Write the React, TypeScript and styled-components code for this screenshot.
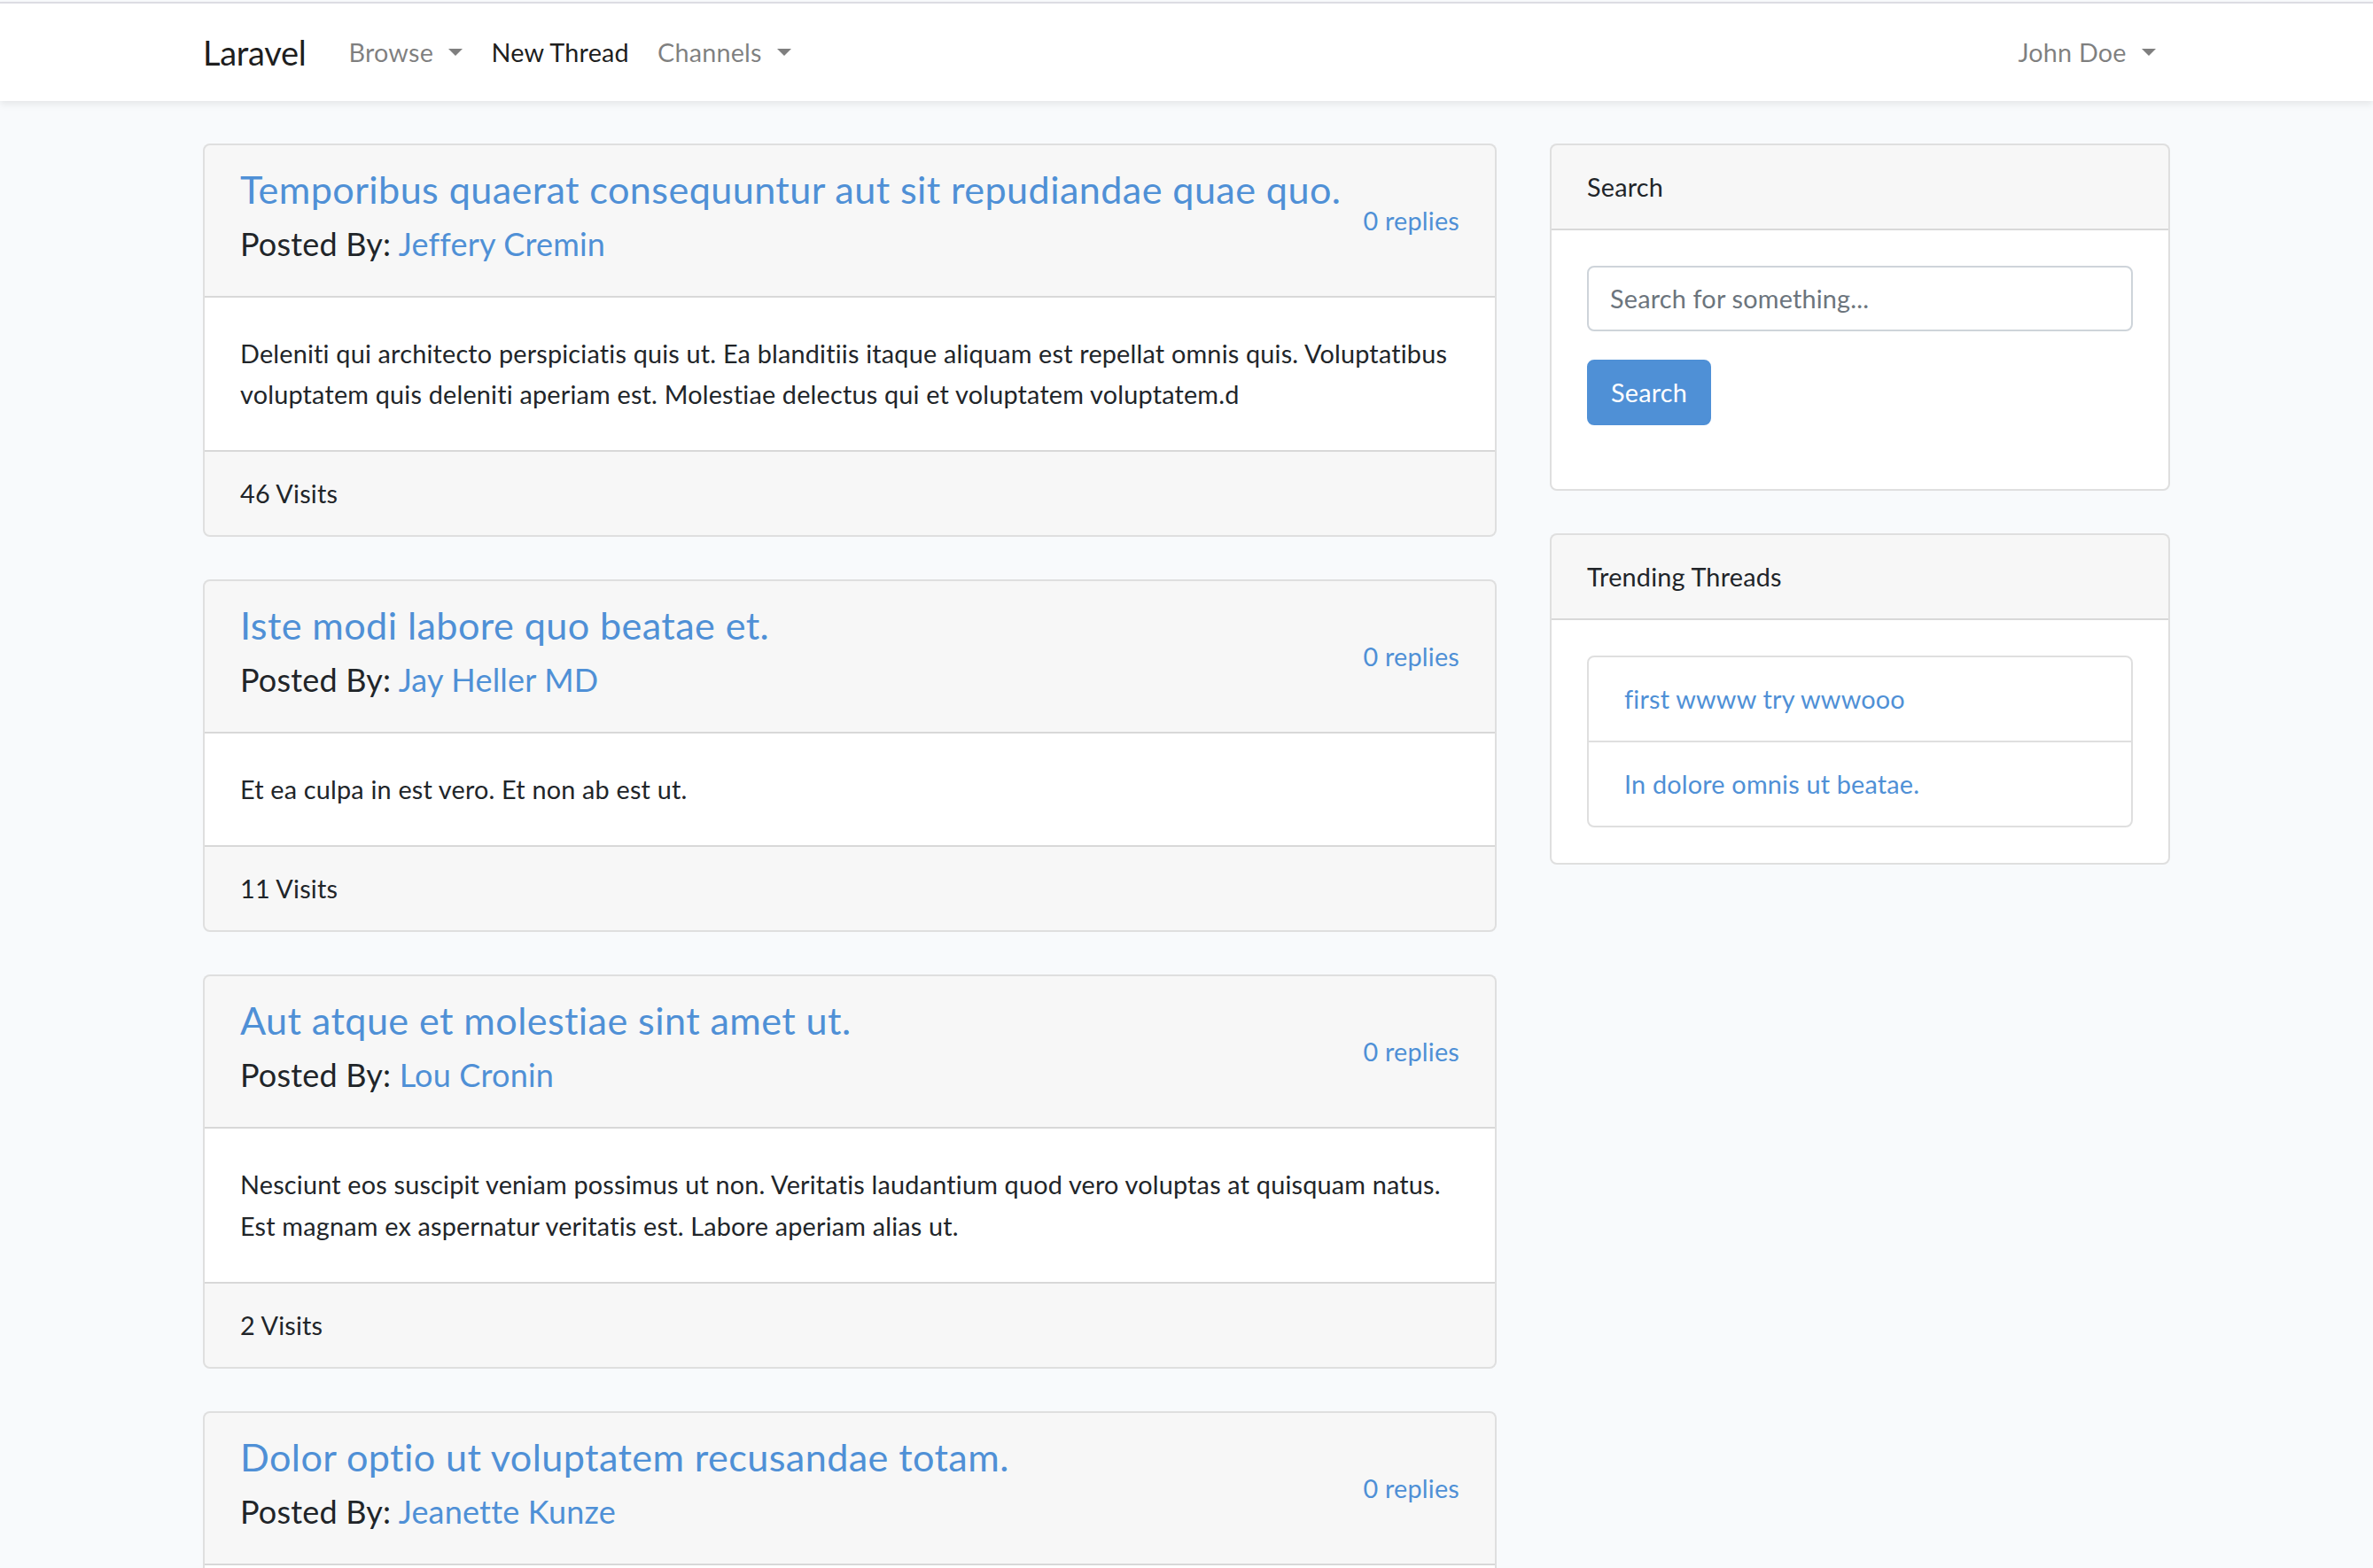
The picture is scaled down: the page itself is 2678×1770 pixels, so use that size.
import React from 'react';
import styled, { createGlobalStyle } from 'styled-components';

const BLUE = '#4f90d6';
const BORDER = 'rgba(0,0,0,.125)';

const GlobalStyle = createGlobalStyle`
  * { box-sizing: border-box; }
  html, body { margin: 0; padding: 0; }
  body {
    background: #f8fafc;
    font-family: Lato, "Noto Sans", sans-serif;
    font-size: 28.8px;
    line-height: 1.6;
    letter-spacing: 0.007em;
    color: #212529;
    padding-top: 2px;
  }
  a { color: ${BLUE}; text-decoration: none; }
`;

const Navbar = styled.nav`
  background: #fff;
  border-top: 2px solid #dcdce3;
  box-shadow: 0 4px 8px rgba(0, 0, 0, 0.075);
  padding: 16px 0;
  position: relative;
`;

const Container = styled.div`
  width: 2280px;
  max-width: 100%;
  margin: 0 auto;
  padding: 0 30px;
`;

const NavInner = styled.div`
  display: flex;
  align-items: center;
`;

const Brand = styled.a`
  font-size: 38px;
  line-height: 60px;
  letter-spacing: -0.3px;
  padding: 9px 0;
  margin-right: 32px;
  color: rgba(0, 0, 0, 0.9);
`;

const NavGroup = styled.div<{ $right?: boolean }>`
  display: flex;
  align-items: center;
  margin-left: ${(p) => (p.$right ? 'auto' : '0')};
`;

const NavLink = styled.a<{ $active?: boolean; $caret?: boolean }>`
  padding: 16px;
  font-size: 28.8px;
  line-height: 1.6;
  color: ${(p) => (p.$active ? 'rgba(0,0,0,.9)' : 'rgba(0,0,0,.5)')};
  ${(p) =>
    p.$caret
      ? `&::after {
    content: '';
    display: inline-block;
    margin-left: 0.6em;
    vertical-align: 0.255em;
    border-top: 0.3em solid;
    border-right: 0.3em solid transparent;
    border-bottom: 0;
    border-left: 0.3em solid transparent;
  }`
      : ''}
`;

const Main = styled.main`
  padding: 48px 0;
`;

const Row = styled.div`
  display: grid;
  grid-template-columns: 1460px 700px;
  column-gap: 60px;
  align-items: start;
`;

const Column = styled.div`
  display: flex;
  flex-direction: column;
  gap: 48px;
`;

const Card = styled.div`
  background: #fff;
  border: 2px solid ${BORDER};
  border-radius: 8px;
  overflow: hidden;
`;

const CardHeader = styled.div`
  padding: 24px 40px;
  background: rgba(0, 0, 0, 0.03);
  border-bottom: 2px solid ${BORDER};
`;

const CardBody = styled.div`
  padding: 40px;
`;

const CardFooter = styled.div`
  padding: 24px 40px;
  background: rgba(0, 0, 0, 0.03);
  border-top: 2px solid ${BORDER};
`;

const Level = styled.div`
  display: flex;
  align-items: center;
`;

const Grow = styled.div`
  flex: 1;
`;

const Title = styled.h4`
  margin: 0 0 14px;
  font-size: 43.2px;
  line-height: 1.2;
  font-weight: 400;
  letter-spacing: 0.009em;
`;

const PostedBy = styled.h5`
  margin: 0 0 13px;
  font-size: 36px;
  line-height: 1.2;
  font-weight: 400;
`;

const Body = styled.div``;

const FormGroup = styled.div`
  margin-bottom: 32px;
`;

const Input = styled.input`
  display: block;
  width: 100%;
  height: 74px;
  padding: 12px 24px;
  font-family: inherit;
  font-size: 28.8px;
  line-height: 1.6;
  letter-spacing: inherit;
  color: #495057;
  background: #fff;
  border: 2px solid #ced4da;
  border-radius: 8px;
  outline: none;
  &::placeholder {
    color: #6c757d;
    opacity: 1;
  }
`;

const Button = styled.button`
  display: inline-block;
  font-family: inherit;
  font-size: 28.8px;
  line-height: 1.6;
  letter-spacing: inherit;
  padding: 12px 25px;
  color: #fff;
  background: ${BLUE};
  border: 2px solid ${BLUE};
  border-radius: 8px;
  cursor: pointer;
`;

const ListGroup = styled.ul`
  list-style: none;
  margin: 0;
  padding: 0;
  border: 2px solid ${BORDER};
  border-radius: 8px;
`;

const ListItem = styled.li`
  padding: 24px 40px;
  & + & {
    border-top: 2px solid ${BORDER};
  }
`;

type Thread = {
  title: string;
  author: string;
  body: string;
  visits: number;
};

const threads: Thread[] = [
  {
    title: 'Temporibus quaerat consequuntur aut sit repudiandae quae quo.',
    author: 'Jeffery Cremin',
    body:
      'Deleniti qui architecto perspiciatis quis ut. Ea blanditiis itaque aliquam est repellat omnis quis. Voluptatibus voluptatem quis deleniti aperiam est. Molestiae delectus qui et voluptatem voluptatem.d',
    visits: 46,
  },
  {
    title: 'Iste modi labore quo beatae et.',
    author: 'Jay Heller MD',
    body: 'Et ea culpa in est vero. Et non ab est ut.',
    visits: 11,
  },
  {
    title: 'Aut atque et molestiae sint amet ut.',
    author: 'Lou Cronin',
    body:
      'Nesciunt eos suscipit veniam possimus ut non. Veritatis laudantium quod vero voluptas at quisquam natus. Est magnam ex aspernatur veritatis est. Labore aperiam alias ut.',
    visits: 2,
  },
  {
    title: 'Dolor optio ut voluptatem recusandae totam.',
    author: 'Jeanette Kunze',
    body: 'Quia et voluptas consequatur et. Aut ut et quia dolorem.',
    visits: 7,
  },
];

const ThreadCard: React.FC<{ t: Thread }> = ({ t }) => (
  <Card>
    <CardHeader>
      <Level>
        <Grow>
          <Title>
            <a href="#">{t.title}</a>
          </Title>
          <PostedBy>
            Posted By: <a href="#">{t.author}</a>
          </PostedBy>
        </Grow>
        <a href="#">0 replies</a>
      </Level>
    </CardHeader>
    <CardBody>
      <Body>{t.body}</Body>
    </CardBody>
    <CardFooter>{t.visits} Visits</CardFooter>
  </Card>
);

export default function App() {
  return (
    <>
      <GlobalStyle />
      <Navbar>
        <Container>
          <NavInner>
            <Brand href="#">Laravel</Brand>
            <NavGroup>
              <NavLink href="#" $caret>
                Browse
              </NavLink>
              <NavLink href="#" $active>
                New Thread
              </NavLink>
              <NavLink href="#" $caret>
                Channels
              </NavLink>
            </NavGroup>
            <NavGroup $right>
              <NavLink href="#" $caret>
                John Doe
              </NavLink>
            </NavGroup>
          </NavInner>
        </Container>
      </Navbar>
      <Main>
        <Container>
          <Row>
            <Column>
              {threads.map((t) => (
                <ThreadCard key={t.title} t={t} />
              ))}
            </Column>
            <Column>
              <Card>
                <CardHeader>Search</CardHeader>
                <CardBody>
                  <FormGroup>
                    <Input type="text" placeholder="Search for something..." />
                  </FormGroup>
                  <FormGroup>
                    <Button type="button">Search</Button>
                  </FormGroup>
                </CardBody>
              </Card>
              <Card>
                <CardHeader>Trending Threads</CardHeader>
                <CardBody>
                  <ListGroup>
                    <ListItem>
                      <a href="#">first wwww try wwwooo</a>
                    </ListItem>
                    <ListItem>
                      <a href="#">In dolore omnis ut beatae.</a>
                    </ListItem>
                  </ListGroup>
                </CardBody>
              </Card>
            </Column>
          </Row>
        </Container>
      </Main>
    </>
  );
}
